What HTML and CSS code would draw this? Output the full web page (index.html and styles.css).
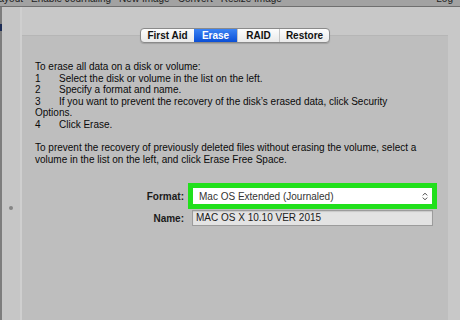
FILE: index.html
```html
<!DOCTYPE html>
<html lang="en">
<head>
  <meta charset="UTF-8">
  <meta name="viewport" content="width=device-width, initial-scale=1.0">
  <title>Disk Utility - Erase</title>
  <link rel="stylesheet" href="styles.css">
</head>
<body>
  <div class="toolbar">
    <div class="toolbar-items">
      <span class="tool">Layout</span>
      <span class="tool">Enable Journaling</span>
      <span class="tool">New Image</span>
      <span class="tool">Convert</span>
      <span class="tool">Resize Image</span>
      <span class="tool tool-log">Log</span>
    </div>
  </div>
  <div class="window">
    <div class="edge"><span class="edge-mark"></span></div>
    <aside class="sidebar"><span class="split-dot"></span></aside>
    <main class="content">
      <ul class="tabs">
        <li class="tab">First Aid</li>
        <li class="tab active">Erase</li>
        <li class="tab">RAID</li>
        <li class="tab">Restore</li>
      </ul>
      <section class="panel">
        <p class="help">
          To erase all data on a disk or volume:<br>
          <span class="num">1</span>Select the disk or volume in the list on the left.<br>
          <span class="num">2</span>Specify a format and name.<br>
          <span class="num">3</span>If you want to prevent the recovery of the disk’s erased data, click Security<br>
          Options.<br>
          <span class="num">4</span>Click Erase.
        </p>
        <p class="help">
          To prevent the recovery of previously deleted files without erasing the volume, select a<br>
          volume in the list on the left, and click Erase Free Space.
        </p>
        <div class="form">
          <label class="form-label">Format:</label>
          <div class="highlight">
            <div class="select">
              <span>Mac OS Extended (Journaled)</span>
              <svg class="select-arrows" width="6" height="9" viewBox="0 0 6 9">
                <path d="M0.8 3.4 L3 1.2 L5.2 3.4 M0.8 5.6 L3 7.8 L5.2 5.6" fill="none" stroke="#444" stroke-width="1"/>
              </svg>
            </div>
          </div>
          <label class="form-label">Name:</label>
          <div class="name-field">MAC OS X 10.10 VER 2015</div>
        </div>
      </section>
    </main>
  </div>
</body>
</html>
```

FILE: styles.css
```css
body, ul, li, p {
  margin: 0;
  padding: 0;
  box-sizing: border-box;
}
ul, li {
  list-style: none;
}
body {
  width: 460px;
  height: 320px;
  overflow: hidden;
  background: #c8c8c8;
  font-family: "Liberation Sans", Arial, sans-serif;
  color: #111;
}

/* toolbar, cut off at the top of the shot */
.toolbar {
  height: 7px;
  overflow: hidden;
  background: #a2a2a2;
  border-bottom: 1px solid #6f6f6f;
  box-sizing: border-box;
}
.toolbar-items {
  display: flex;
  margin-top: -8px;
  margin-left: -7px;
  font-size: 10px;
  line-height: 13px;
  color: #1e1e1e;
}
.tool {
  margin-right: 8px;
  white-space: nowrap;
}
.tool-log {
  margin-left: auto;
  margin-right: 7px;
}

.window {
  display: flex;
  height: 313px;
}
.edge {
  width: 2px;
  background: #7d7d7d;
}
.edge-mark {
  display: block;
  height: 7px;
  margin-top: 17px;
  background: #1c2c55;
}
.sidebar {
  width: 18px;
  background: #c6c6c6;
  border-right: 2px solid #cfcfcf;
  padding-top: 199px;
}
.split-dot {
  display: block;
  width: 4px;
  height: 4px;
  margin-left: 7px;
  border-radius: 50%;
  background: #858585;
}

.content {
  display: flex;
  flex-direction: column;
  align-items: center;
  width: 426px;
  padding-top: 21px;
}

/* segmented tabs */
.tabs {
  display: flex;
  height: 15px;
  border: 1px solid #8a8a8a;
  border-radius: 4px;
  overflow: hidden;
  background: linear-gradient(#fdfdfd, #e9e9e9);
  box-shadow: 0 1px 1px rgba(0, 0, 0, 0.15);
  margin-bottom: -8px;
  position: relative;
  z-index: 1;
  box-sizing: border-box;
}
.tab {
  font-size: 10px;
  font-weight: bold;
  line-height: 13px;
  text-align: center;
  border-left: 1px solid #c4c4c4;
  color: #111;
}
.tab:first-child {
  border-left: none;
  width: 53px;
}
.tab:nth-child(2) {
  width: 43px;
}
.tab:nth-child(3) {
  width: 42px;
}
.tab:nth-child(4) {
  width: 50px;
}
.tab.active {
  background: linear-gradient(#3b83f4, #0b4fd6);
  color: #fff;
  border-left: none;
}

.panel {
  width: 426px;
  flex: 1;
  background: #bebebe;
  border-top: 1px solid #b6b6b6;
  padding: 25px 0 0 13px;
  box-sizing: border-box;
}
.help {
  font-size: 10px;
  line-height: 11.6px;
  color: #0a0a0a;
  margin-bottom: 11.6px;
}
.num {
  display: inline-block;
  width: 24px;
}

/* format / name form */
.form {
  display: grid;
  grid-template-columns: 149px 249px;
  column-gap: 4px;
  row-gap: 1px;
  align-items: center;
  margin-top: 18px;
}
.form-label {
  font-size: 10px;
  font-weight: bold;
  text-align: right;
  color: #1a1a1a;
}
.highlight {
  height: 26px;
  background: #21e01c;
  padding: 5px;
  box-sizing: border-box;
}
.select {
  display: flex;
  align-items: center;
  justify-content: space-between;
  height: 16px;
  background: #fff;
  padding: 0 4px 0 6px;
  font-size: 10px;
  color: #333;
}
.name-field {
  width: 241px;
  height: 16px;
  margin-left: 4px;
  box-sizing: border-box;
  border: 1px solid #9c9c9c;
  background: #e3e3e3;
  box-shadow: inset 0 1px 1px rgba(0, 0, 0, 0.12);
  font-size: 10px;
  line-height: 14px;
  padding-left: 3px;
  color: #1a1a1a;
}
```
